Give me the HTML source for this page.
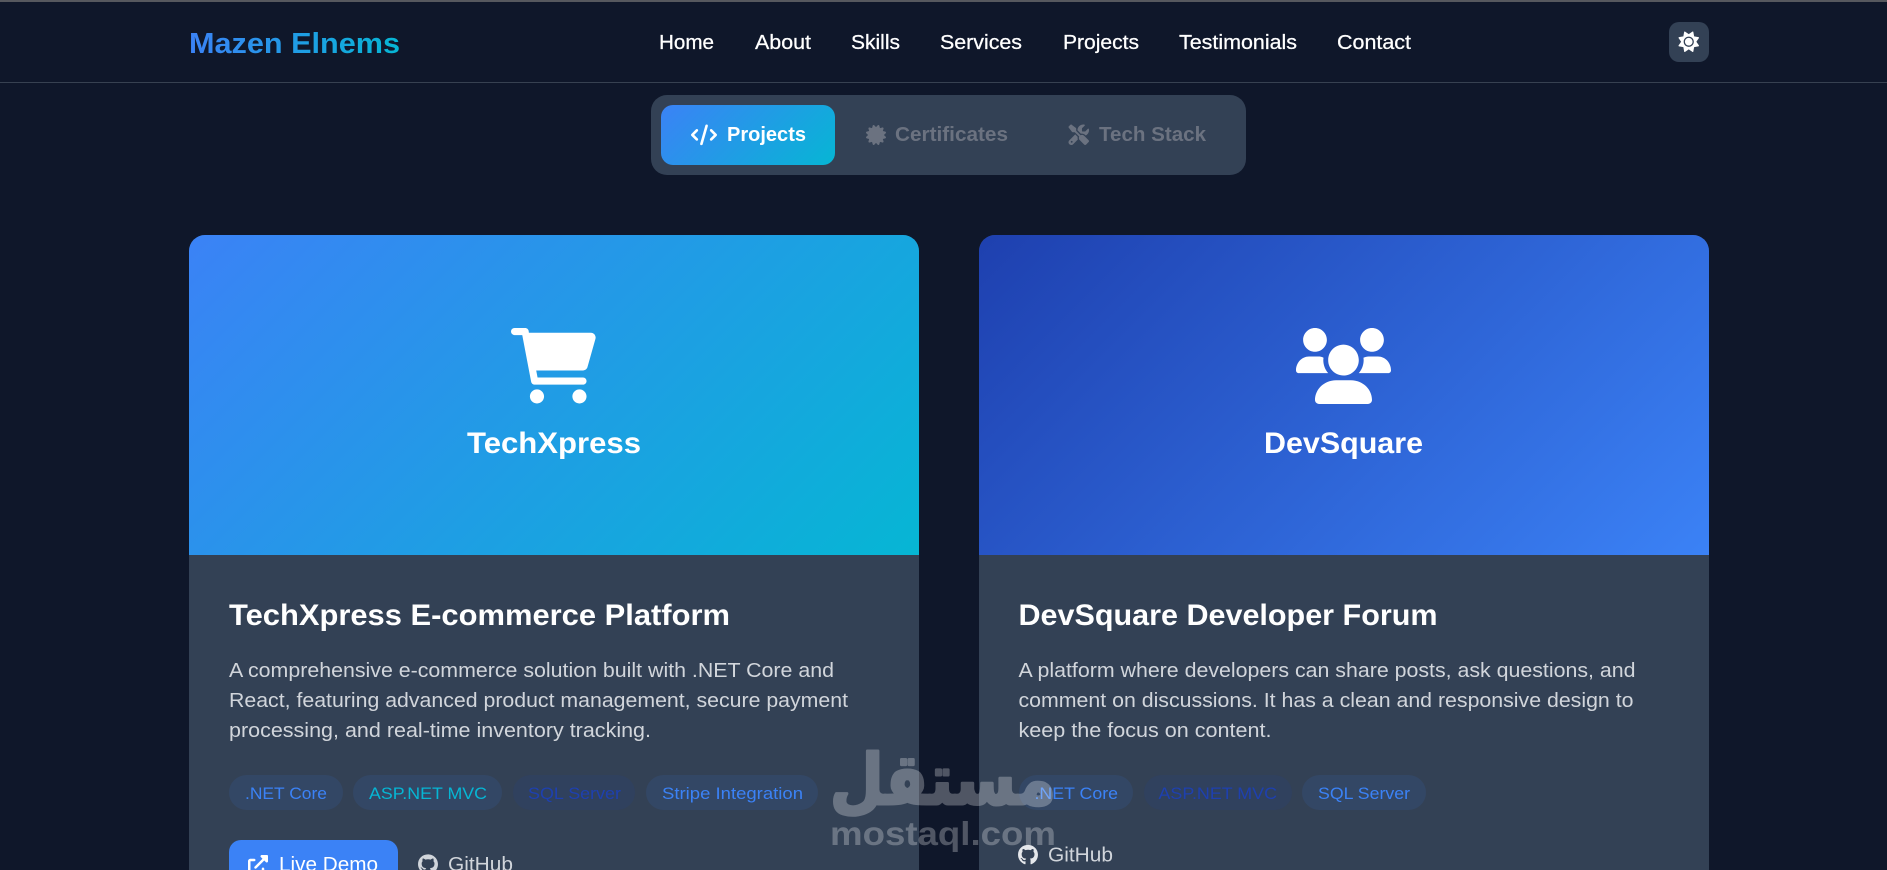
<!DOCTYPE html>
<html lang="en">
<head>
<meta charset="utf-8">
<title>Mazen Elnems</title>
<style>
html{margin:0;padding:0;background:#0f172a;width:1887px;height:870px;overflow:hidden;}
body{margin:0;padding:0;background:#0f172a;width:1887px;height:870px;overflow:hidden;position:relative;font-family:"Liberation Sans",sans-serif;}
.b{position:absolute;box-sizing:border-box;}
svg.t{position:absolute;left:0;top:0;}
svg.t text{font-family:"Liberation Sans",sans-serif;}
.nav{font-size:20px;fill:#fff;stroke:#fff;stroke-width:.25px;}
.tab{font-size:20px;font-weight:700;}
.h{font-size:30px;font-weight:700;fill:#fff;}
.p{font-size:20px;fill:#d1d5db;}
.tag{font-size:17px;}
.btn{font-size:20px;}
</style>
</head>
<body>
<div class="b" style="left:0;top:0;width:1887px;height:2px;background:#56585e;"></div>
<div class="b" style="left:0;top:82px;width:1887px;height:1px;background:#374151;"></div>
<div class="b" style="left:1669px;top:22px;width:40px;height:40px;border-radius:10px;background:#334155;"></div>
<div class="b" style="left:651px;top:95px;width:595px;height:80px;border-radius:16px;background:#334155;"></div>
<div class="b" style="left:661px;top:105px;width:174px;height:60px;border-radius:12px;background:linear-gradient(135deg,#3b82f6,#06b6d4);"></div>

<div class="b" style="left:189px;top:235px;width:730px;height:635px;border-radius:16px 16px 0 0;background:#334155;overflow:hidden;">
  <div style="height:320px;background:linear-gradient(135deg,#3b82f6,#06b6d4);"></div>
</div>
<div class="b" style="left:979px;top:235px;width:730px;height:635px;border-radius:16px 16px 0 0;background:#334155;overflow:hidden;">
  <div style="height:320px;background:linear-gradient(135deg,#1e40af,#3b82f6);"></div>
</div>

<div class="b" style="left:229px;top:775px;width:114px;height:35px;border-radius:18px;background:rgba(59,130,246,.1);"></div>
<div class="b" style="left:353px;top:775px;width:149px;height:35px;border-radius:18px;background:rgba(59,130,246,.1);"></div>
<div class="b" style="left:513px;top:775px;width:122px;height:35px;border-radius:18px;background:rgba(30,64,175,.1);"></div>
<div class="b" style="left:646px;top:775px;width:172px;height:35px;border-radius:18px;background:rgba(59,130,246,.1);"></div>
<div class="b" style="left:1019px;top:775px;width:114px;height:35px;border-radius:18px;background:rgba(59,130,246,.1);"></div>
<div class="b" style="left:1144px;top:775px;width:148px;height:35px;border-radius:18px;background:rgba(30,64,175,.1);"></div>
<div class="b" style="left:1302px;top:775px;width:124px;height:35px;border-radius:18px;background:rgba(59,130,246,.1);"></div>

<div class="b" style="left:229px;top:840px;width:169px;height:30px;border-radius:12px 12px 0 0;background:#3b82f6;"></div>

<svg class="t" width="1887" height="870" viewBox="0 0 1887 870" xmlns="http://www.w3.org/2000/svg">
<defs>
<linearGradient id="lg" gradientUnits="userSpaceOnUse" x1="189" y1="0" x2="400" y2="0"><stop offset="0" stop-color="#3b82f6"/><stop offset="1" stop-color="#06b6d4"/></linearGradient>
<symbol id="gh" viewBox="0 0 496 512"><path fill="currentColor" d="M244.8 8C106.1 8 0 113.3 0 252c0 110.9 69.8 205.8 169.5 239.2 12.8 2.3 17.3-5.6 17.3-12.1 0-6.2-.3-40.4-.3-61.4 0 0-70 15-84.7-29.8 0 0-11.4-29.1-27.8-36.6 0 0-22.9-15.7 1.6-15.4 0 0 24.9 2 38.6 25.8 21.9 38.6 58.6 27.5 72.9 20.9 2.3-16 8.8-27.1 16-33.7-55.9-6.2-112.3-14.3-112.3-110.5 0-27.5 7.6-41.3 23.6-58.9-2.6-6.5-11.1-33.3 2.6-67.9 20.9-6.5 69 27 69 27 20-5.6 41.5-8.5 62.8-8.5s42.8 2.9 62.8 8.5c0 0 48.1-33.6 69-27 13.7 34.7 5.2 61.4 2.6 67.9 16 17.7 25.8 31.5 25.8 58.9 0 96.5-58.9 104.2-114.8 110.5 9.2 7.9 17 22.9 17 46.4 0 33.7-.3 75.4-.3 83.6 0 6.5 4.6 14.4 17.3 12.1C428.2 457.8 496 362.9 496 252 496 113.3 383.5 8 244.8 8z"/></symbol>
</defs>

<text x="189" y="53" font-size="29" font-weight="700" fill="url(#lg)" textLength="211" lengthAdjust="spacingAndGlyphs">Mazen Elnems</text>
<text class="nav" x="659" y="49" textLength="55" lengthAdjust="spacingAndGlyphs">Home</text>
<text class="nav" x="755" y="49" textLength="56" lengthAdjust="spacingAndGlyphs">About</text>
<text class="nav" x="851" y="49" textLength="49" lengthAdjust="spacingAndGlyphs">Skills</text>
<text class="nav" x="940" y="49" textLength="82" lengthAdjust="spacingAndGlyphs">Services</text>
<text class="nav" x="1063" y="49" textLength="76" lengthAdjust="spacingAndGlyphs">Projects</text>
<text class="nav" x="1179" y="49" textLength="118" lengthAdjust="spacingAndGlyphs">Testimonials</text>
<text class="nav" x="1337" y="49" textLength="74" lengthAdjust="spacingAndGlyphs">Contact</text>

<svg x="1678.5" y="31.5" width="20.5" height="20.5" viewBox="0 0 512 512"><path fill="#fff" d="M256 159.1c-53.02 0-95.1 42.98-95.1 95.1S202.1 351.1 256 351.1s95.1-42.98 95.1-95.1S309 159.1 256 159.1zM509.3 347L446.1 255.1l63.15-91.01c6.332-9.125 1.104-21.74-9.826-23.72l-109-19.7l-19.7-109c-1.975-10.93-14.59-16.16-23.72-9.824L256 65.89L164.1 2.736c-9.125-6.332-21.74-1.107-23.72 9.824L121.6 121.6L12.56 141.3C1.633 143.2-3.596 155.9 2.736 164.1L65.89 256l-63.15 91.01c-6.332 9.125-1.105 21.74 9.824 23.72l109 19.7l19.7 109c1.975 10.93 14.59 16.16 23.72 9.824L256 446.1l91.01 63.15c9.127 6.334 21.75 1.107 23.72-9.822l19.7-109l109-19.7C510.4 368.8 515.6 356.1 509.3 347zM256 383.1c-70.69 0-127.1-57.31-127.1-127.1c0-70.69 57.31-127.1 127.1-127.1s127.1 57.31 127.1 127.1C383.1 326.7 326.7 383.1 256 383.1z"/></svg>

<svg x="691" y="124.5" width="26" height="20.8" viewBox="0 0 640 512"><path fill="#fff" d="M414.8 40.79L286.8 488.8C281.9 505.8 264.2 515.6 247.2 510.8C230.2 505.9 220.4 488.2 225.2 471.2L353.2 23.21C358.1 6.216 375.8-3.624 392.8 1.232C409.8 6.087 419.6 23.8 414.8 40.79H414.8zM518.6 121.4L630.6 233.4C643.1 245.9 643.1 266.1 630.6 278.6L518.6 390.6C506.1 403.1 485.9 403.1 473.4 390.6C460.9 378.1 460.9 357.9 473.4 345.4L562.7 256L473.4 166.6C460.9 154.1 460.9 133.9 473.4 121.4C485.9 108.9 506.1 108.9 518.6 121.4V121.4zM166.6 166.6L77.25 256L166.6 345.4C179.1 357.9 179.1 378.1 166.6 390.6C154.1 403.1 133.9 403.1 121.4 390.6L9.372 278.6C-3.124 266.1-3.124 245.9 9.372 233.4L121.4 121.4C133.9 108.9 154.1 108.9 166.6 121.4C179.1 133.9 179.1 154.1 166.6 166.6V166.6z"/></svg>
<text class="tab" x="727" y="141" fill="#fff" textLength="79" lengthAdjust="spacingAndGlyphs">Projects</text>

<svg x="866" y="125" width="20" height="20" viewBox="0 0 512 512"><path fill="#6b7280" d="M211 7.3C205 1 196-1.4 187.6 .8s-14.9 8.9-17.1 17.3L154.7 80.6l-62-17.5c-8.4-2.4-17.4 0-23.5 6.1s-8.5 15.1-6.1 23.5l17.5 62L18.1 170.6c-8.4 2.1-15 8.7-17.3 17.1S1 205 7.3 211l46.2 45L7.3 301C1 307-1.4 316 .8 324.4s8.9 14.9 17.3 17.1l62.5 15.8-17.5 62c-2.4 8.4 0 17.4 6.1 23.5s15.1 8.5 23.5 6.1l62-17.5 15.8 62.5c2.1 8.4 8.7 15 17.1 17.3s17.3-.2 23.4-6.4l45-46.2 45 46.2c6.1 6.2 15 8.7 23.4 6.4s14.9-8.9 17.1-17.3l15.8-62.5 62 17.5c8.4 2.4 17.4 0 23.5-6.1s8.5-15.1 6.1-23.5l-17.5-62 62.5-15.8c8.4-2.1 15-8.7 17.3-17.1s-.2-17.4-6.4-23.4l-46.2-45 46.2-45c6.2-6.1 8.7-15 6.4-23.4s-8.9-14.9-17.3-17.1l-62.5-15.8 17.5-62c2.4-8.4 0-17.4-6.1-23.5s-15.1-8.5-23.5-6.1l-62 17.5L341.4 18.1c-2.1-8.4-8.7-15-17.1-17.3S307 1 301 7.3L256 53.5 211 7.3z"/></svg>
<text class="tab" x="895" y="141" fill="#6b7280" textLength="113" lengthAdjust="spacingAndGlyphs">Certificates</text>

<svg x="1068.5" y="124.5" width="20.5" height="20.5" viewBox="0 0 512 512"><path fill="#6b7280" d="M78.6 5C69.1-2.4 55.6-1.5 47 7L7 47c-8.5 8.5-9.4 22-2.1 31.6l80 104c4.5 5.9 11.6 9.4 19 9.4h54.1l109 109c-14.7 29-10 65.4 14.3 89.6l112 112c12.5 12.5 32.8 12.5 45.3 0l64-64c12.5-12.5 12.5-32.8 0-45.3l-112-112c-24.2-24.2-60.6-29-89.6-14.3l-109-109V104c0-7.5-3.5-14.5-9.4-19L78.6 5zM19.9 396.1C7.2 408.8 0 426.1 0 444.1C0 481.6 30.4 512 67.9 512c18 0 35.3-7.2 48-19.9L233.7 374.3c-7.8-20.9-9-43.6-3.6-65.1l-61.7-61.7L19.9 396.1zM512 144c0-10.5-1.1-20.7-3.2-30.5c-2.4-11.2-16.1-14.1-24.2-6l-63.9 63.9c-3 3-7.1 4.7-11.3 4.7H352c-8.8 0-16-7.2-16-16V102.6c0-4.2 1.7-8.3 4.7-11.3l63.9-63.9c8.1-8.1 5.2-21.8-6-24.2C388.7 1.1 378.5 0 368 0C288.5 0 224 64.5 224 144l0 .8 85.3 85.3c36-9.1 75.8 .5 104 28.7L429 274.5c49-23 83-72.8 83-130.5zM56 432a24 24 0 1 1 48 0 24 24 0 1 1 -48 0z"/></svg>
<text class="tab" x="1099" y="141" fill="#6b7280" textLength="107" lengthAdjust="spacingAndGlyphs">Tech Stack</text>

<svg x="511" y="328" width="85" height="75.5" viewBox="0 0 576 512"><path fill="#fff" d="M96 0C107.5 0 117.4 8.19 119.6 19.51L121.1 32H541.8C562.1 32 578.3 52.25 572.6 72.66L518.6 264.7C514.7 278.5 502.1 288 487.8 288H170.7L179.9 336H488C501.3 336 512 346.7 512 360C512 373.3 501.3 384 488 384H159.1C148.5 384 138.6 375.8 136.4 364.5L76.14 48H24C10.75 48 0 37.25 0 24C0 10.75 10.75 0 24 0H96zM128 464C128 437.5 149.5 416 176 416C202.5 416 224 437.5 224 464C224 490.5 202.5 512 176 512C149.5 512 128 490.5 128 464zM512 464C512 490.5 490.5 512 464 512C437.5 512 416 490.5 416 464C416 437.5 437.5 416 464 416C490.5 416 512 437.5 512 464z"/></svg>
<text x="467" y="453" font-size="30" font-weight="700" fill="#fff" textLength="174" lengthAdjust="spacingAndGlyphs">TechXpress</text>

<svg x="1296" y="328" width="95" height="76" viewBox="0 0 640 512"><path fill="#fff" d="M319.9 320c57.41 0 103.1-46.56 103.1-104c0-57.44-46.54-104-103.1-104c-57.41 0-103.1 46.56-103.1 104C215.9 273.4 262.5 320 319.9 320zM369.9 352H270.1C191.6 352 128 411.7 128 485.3C128 500.1 140.7 512 156.4 512h327.2C499.3 512 512 500.1 512 485.3C512 411.7 448.4 352 369.9 352zM512 160c44.18 0 80-35.82 80-80S556.2 0 512 0c-44.18 0-80 35.82-80 80S467.8 160 512 160zM183.9 216c0-5.449 .9824-10.63 1.609-15.91C174.6 194.1 162.6 192 149.9 192H88.08C39.44 192 0 233.8 0 285.3C0 295.6 7.887 304 17.62 304h199.5C196.7 280.2 183.9 249.7 183.9 216zM128 160c44.18 0 80-35.82 80-80S172.2 0 128 0C83.82 0 48 35.82 48 80S83.82 160 128 160zM551.9 192h-61.84c-12.8 0-24.88 3.037-35.86 8.24C454.8 205.5 455.8 210.6 455.8 216c0 33.71-12.78 64.21-33.16 88h199.7C632.1 304 640 295.6 640 285.3C640 233.8 600.6 192 551.9 192z"/></svg>
<text x="1264" y="453" font-size="30" font-weight="700" fill="#fff" textLength="159" lengthAdjust="spacingAndGlyphs">DevSquare</text>

<text class="h" x="229" y="625" textLength="501" lengthAdjust="spacingAndGlyphs">TechXpress E-commerce Platform</text>
<text class="p" x="229" y="677" textLength="605" lengthAdjust="spacingAndGlyphs">A comprehensive e-commerce solution built with .NET Core and</text>
<text class="p" x="229" y="707" textLength="619" lengthAdjust="spacingAndGlyphs">React, featuring advanced product management, secure payment</text>
<text class="p" x="229" y="737" textLength="422" lengthAdjust="spacingAndGlyphs">processing, and real-time inventory tracking.</text>

<text class="h" x="1018.5" y="625" textLength="419" lengthAdjust="spacingAndGlyphs">DevSquare Developer Forum</text>
<text class="p" x="1018.5" y="677" textLength="617" lengthAdjust="spacingAndGlyphs">A platform where developers can share posts, ask questions, and</text>
<text class="p" x="1018.5" y="707" textLength="615" lengthAdjust="spacingAndGlyphs">comment on discussions. It has a clean and responsive design to</text>
<text class="p" x="1018.5" y="737" textLength="253" lengthAdjust="spacingAndGlyphs">keep the focus on content.</text>

<text class="tag" x="245" y="799" fill="#3b82f6" textLength="82" lengthAdjust="spacingAndGlyphs">.NET Core</text>
<text class="tag" x="369" y="799" fill="#06b6d4" textLength="118" lengthAdjust="spacingAndGlyphs">ASP.NET MVC</text>
<text class="tag" x="528" y="799" fill="#1e40af" textLength="93" lengthAdjust="spacingAndGlyphs">SQL Server</text>
<text class="tag" x="662" y="799" fill="#3b82f6" textLength="141" lengthAdjust="spacingAndGlyphs">Stripe Integration</text>
<text class="tag" x="1034.5" y="799" fill="#3b82f6" textLength="83.5" lengthAdjust="spacingAndGlyphs">.NET Core</text>
<text class="tag" x="1158.5" y="799" fill="#1e40af" textLength="118.5" lengthAdjust="spacingAndGlyphs">ASP.NET MVC</text>
<text class="tag" x="1318" y="799" fill="#3b82f6" textLength="92" lengthAdjust="spacingAndGlyphs">SQL Server</text>

<svg x="248" y="855" width="20" height="20" viewBox="0 0 512 512"><path fill="#fff" d="M384 320c-17.67 0-32 14.33-32 32v96H64V160h96c17.67 0 32-14.33 32-32s-14.32-32-32-32L64 96c-35.35 0-64 28.65-64 64V448c0 35.34 28.65 64 64 64h288c35.35 0 64-28.66 64-64v-96C416 334.3 401.7 320 384 320zM488 0H352c-12.94 0-24.62 7.797-29.56 19.75c-4.969 11.97-2.219 25.72 6.938 34.88L370.8 96L169.4 297.4c-12.5 12.5-12.5 32.75 0 45.25C175.6 348.9 183.8 352 192 352s16.38-3.125 22.62-9.375L416 141.3l41.38 41.38c9.156 9.156 22.91 11.91 34.88 6.938C504.2 184.6 512 172.9 512 160V24C512 10.74 501.3 0 488 0z"/></svg>
<text class="btn" x="279" y="871" fill="#fff" textLength="99" lengthAdjust="spacingAndGlyphs">Live Demo</text>
<use href="#gh" x="418" y="854" width="20" height="20.6" color="#d1d5db"/>
<text class="btn" x="448" y="871" fill="#d1d5db" textLength="65" lengthAdjust="spacingAndGlyphs">GitHub</text>
<use href="#gh" x="1018" y="844.5" width="20" height="20.6" color="#e5e7eb"/>
<text class="btn" x="1048" y="861.5" fill="#d1d5db" textLength="65" lengthAdjust="spacingAndGlyphs">GitHub</text>

<g opacity=".27" fill="#fff">
<text x="1056" y="804" direction="rtl" font-size="70" font-weight="700" stroke="#fff" stroke-width="3" stroke-linejoin="round" style='font-family:"DejaVu Sans",sans-serif' textLength="226" lengthAdjust="spacingAndGlyphs">مستقل</text>
<text x="830" y="845" font-size="33" font-weight="700" textLength="226" lengthAdjust="spacingAndGlyphs">mostaql.com</text>
</g>
</svg>
</body>
</html>
